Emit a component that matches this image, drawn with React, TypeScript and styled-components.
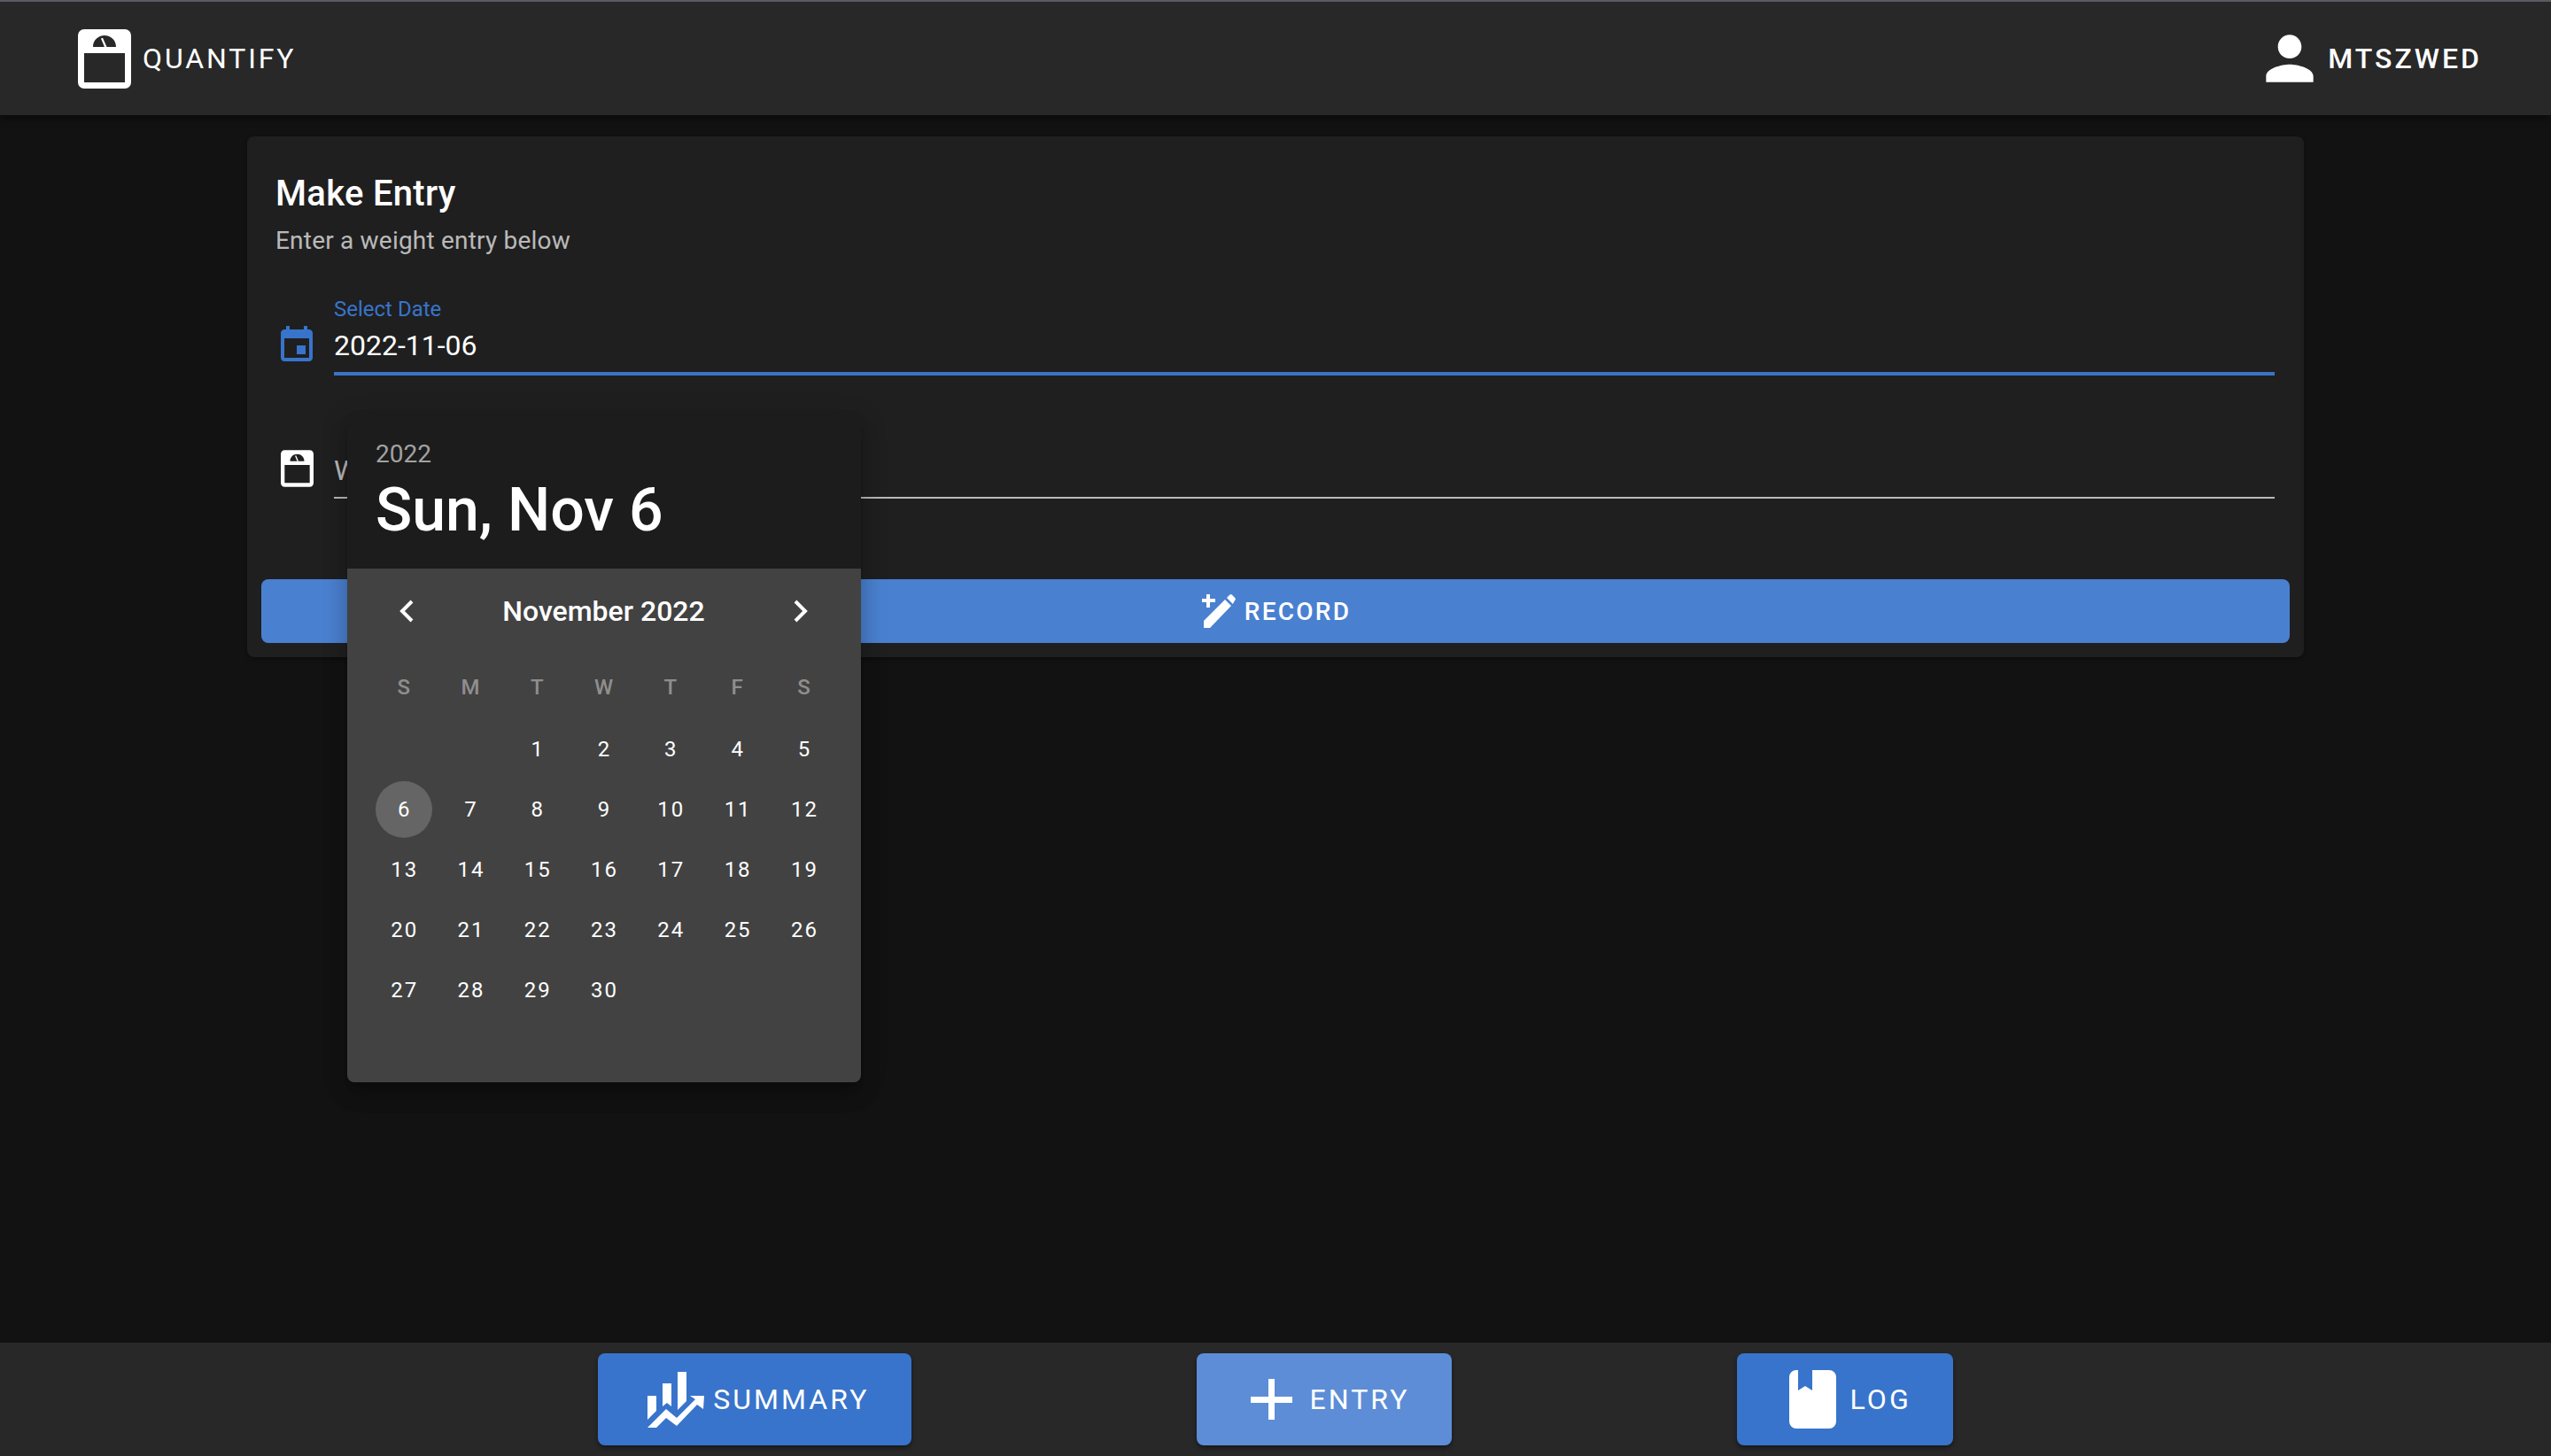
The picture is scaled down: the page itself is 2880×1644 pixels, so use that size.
import React from 'react';
import styled, { createGlobalStyle } from 'styled-components';

const BLUE = '#3874cb';

const GlobalStyle = createGlobalStyle`
  html, body {
    margin: 0;
    padding: 0;
    background: #121212;
    font-family: Roboto, "Liberation Sans", sans-serif;
    color: #fff;
  }
  * {
    box-sizing: border-box;
  }
`;

const Page = styled.div`
  height: 1644px;
  display: flex;
  flex-direction: column;
  background: #121212;
  overflow: hidden;
`;

const TopBar = styled.header`
  height: 130px;
  flex-shrink: 0;
  border-top: 2px solid #5b5b63;
  background: #282828;
  box-shadow: 0 4px 8px rgba(0, 0, 0, 0.45);
  display: flex;
  align-items: center;
  justify-content: space-between;
  padding: 0 78px 0 88px;
  position: relative;
  z-index: 2;
`;

const Brand = styled.div`
  display: flex;
  align-items: center;
  gap: 13px;
`;

const BrandName = styled.span`
  font-size: 32px;
  font-weight: 400;
  letter-spacing: 0.09em;
`;

const UserBox = styled.div`
  display: flex;
  align-items: center;
  gap: 3px;
`;

const UserName = styled.span`
  font-size: 32px;
  font-weight: 500;
  letter-spacing: 0.095em;
`;

const Main = styled.main`
  flex: 1;
  padding-top: 24px;
`;

const Card = styled.section`
  position: relative;
  width: 2322px;
  height: 588px;
  margin: 0 auto;
  padding: 33px 16px 16px;
  border-radius: 8px;
  background: #1f1f1f;
  box-shadow: 0 2px 4px rgba(0, 0, 0, 0.3);
`;

const CardBody = styled.div`
  padding: 0 17px;
`;

const Title = styled.h1`
  margin: 0 0 0 -1px;
  font-size: 40px;
  line-height: 64px;
  font-weight: 500;
  letter-spacing: 0.0075em;
`;

const Subtitle = styled.p`
  margin: 1px 0 41px -1px;
  font-size: 28px;
  line-height: 40px;
  color: rgba(255, 255, 255, 0.7);
  letter-spacing: 0.00714em;
`;

const FieldRow = styled.div`
  display: flex;
  align-items: flex-end;
  gap: 18px;
  margin-bottom: ${p => p.$after}px;
`;

const FieldIcon = styled.div`
  width: 48px;
  height: 48px;
  margin-left: -1px;
  margin-bottom: ${p => p.$lift}px;
  display: flex;
  align-items: center;
  justify-content: center;
  color: ${p => p.$color};
`;

const Field = styled.div`
  flex: 1;
  border-bottom: ${p => (p.$focused ? `4px solid ${BLUE}` : '2px solid #b9b9b9')};
`;

const FieldLabel = styled.div`
  height: 32px;
  font-size: 24px;
  line-height: 32px;
  color: ${BLUE};
`;

const FieldValue = styled.div`
  height: 55px;
  font-size: 32px;
  line-height: 50px;
  color: ${p => (p.$muted ? 'rgba(255, 255, 255, 0.7)' : '#fff')};
`;

const RecordButton = styled.button`
  width: 100%;
  height: 72px;
  border: 0;
  border-radius: 8px;
  padding: 0 0 0 2px;
  background: #4a80d0;
  color: #fff;
  font: 500 28px Roboto, sans-serif;
  letter-spacing: 0.08em;
  display: flex;
  align-items: center;
  justify-content: center;
  gap: 10px;
  margin-top: 91px;
`;

const Picker = styled.div`
  position: absolute;
  left: 113px;
  top: 313px;
  width: 580px;
  border-radius: 8px;
  overflow: hidden;
  box-shadow: 0 10px 10px -6px rgba(0, 0, 0, 0.2), 0 16px 20px 2px rgba(0, 0, 0, 0.14),
    0 6px 28px 4px rgba(0, 0, 0, 0.12);
  z-index: 3;
`;

const PickerHead = styled.div`
  height: 175px;
  padding: 26px 32px 0;
  background: #1c1c1c;
`;

const PickerYear = styled.div`
  font-size: 28px;
  line-height: 40px;
  color: rgba(255, 255, 255, 0.6);
`;

const PickerDate = styled.div`
  margin-top: 3px;
  font-size: 68px;
  line-height: 80px;
  font-weight: 500;
`;

const PickerBody = styled.div`
  height: 580px;
  padding: 20px 26px 0;
  background: #424242;
`;

const MonthNav = styled.div`
  height: 56px;
  display: flex;
  align-items: center;
  justify-content: space-between;
  padding: 0 33px 0 32px;
`;

const MonthName = styled.div`
  font-size: 32px;
  font-weight: 500;
`;

const WeekGrid = styled.div`
  display: grid;
  grid-template-columns: repeat(7, 75.3px);
  height: 40px;
  margin-top: 38px;
  margin-bottom: 16px;
`;

const WeekDay = styled.div`
  display: flex;
  align-items: center;
  justify-content: center;
  font-size: 24px;
  font-weight: 500;
  color: rgba(255, 255, 255, 0.42);
`;

const DayGrid = styled.div`
  display: grid;
  grid-template-columns: repeat(7, 75.3px);
  grid-auto-rows: 68px;
`;

const Day = styled.div`
  display: flex;
  align-items: center;
  justify-content: center;
`;

const DayNum = styled.span`
  width: 64px;
  height: 64px;
  padding-left: 2px;
  border-radius: 50%;
  display: flex;
  align-items: center;
  justify-content: center;
  font-size: 24px;
  letter-spacing: 0.0833em;
  background: ${p => (p.$selected ? '#656565' : 'transparent')};
`;

const BottomBar = styled.nav`
  height: 128px;
  flex-shrink: 0;
  background: #282828;
  display: flex;
  align-items: center;
  justify-content: center;
  gap: 322px;
`;

const NavButton = styled.button`
  height: 104px;
  border: 0;
  border-radius: 8px;
  padding: 0 47px 0 ${p => p.$left}px;
  display: flex;
  align-items: center;
  gap: ${p => p.$gap}px;
  color: #fff;
  background: ${p => (p.$active ? '#5d8dd6' : BLUE)};
  font: 400 32px Roboto, sans-serif;
  letter-spacing: 0.095em;
  box-shadow: 0 3px 5px rgba(0, 0, 0, 0.4);
`;

const ScaleIcon = ({ w, h }: { w: number; h: number }) => (
  <svg width={w} height={h} viewBox="0 0 60 67" fill="currentColor">
    <path
      fillRule="evenodd"
      d="M7 0h46a7 7 0 0 1 7 7v53a7 7 0 0 1-7 7H7a7 7 0 0 1-7-7V7a7 7 0 0 1 7-7zM7 27v33h46V27zM17 20h26c0-7.5-5.800-13-13-13s-13 5.500-13 13z"
    />
    <path d="M26 10.500l2-.800 4.500 10.300h-2.500z" />
  </svg>
);

const PersonIcon = () => (
  <svg width="80" height="80" viewBox="0 0 24 24" fill="#fff">
    <path d="M12 12c2.210 0 4-1.790 4-4s-1.790-4-4-4-4 1.790-4 4 1.790 4 4 4zm0 2c-2.670 0-8 1.340-8 4v2h16v-2c0-2.660-5.330-4-8-4z" />
  </svg>
);

const EventIcon = () => (
  <svg width="48" height="48" viewBox="0 0 24 24" fill={BLUE}>
    <path d="M17 12h-5v5h5v-5zM16 1v2H8V1H6v2H5c-1.110 0-1.990.9-1.990 2L3 19c0 1.100.89 2 2 2h14c1.100 0 2-.9 2-2V5c0-1.100-.9-2-2-2h-1V1h-2zm3 18H5V8h14v11z" />
  </svg>
);

const PencilPlusIcon = () => (
  <svg width="38" height="38" viewBox="0 0 38 38" fill="#fff">
    <path d="M5 0h4v5h6v4H9v6H5V9H0V5h5z" />
    <path d="M2 30L26 6l7 7L9 38H2z" />
    <path d="M28 4l3.200-3.200a2 2 0 0 1 2.800 0l3.200 3.200a2 2 0 0 1 0 2.800L34.800 11z" />
  </svg>
);

const ChevronIcon = ({ flip }: { flip?: boolean }) => (
  <svg width="18" height="26" viewBox="0 0 18 26" fill="none" stroke="#fff" strokeWidth="4">
    <path d={flip ? 'M3 2l11 11L3 24' : 'M15 2L4 13l11 11'} />
  </svg>
);

const SummaryIcon = () => (
  <svg width="64" height="63" viewBox="0 0 64 63" fill="#fff">
    <path d="M0 27h10v17L0 54z" />
    <path d="M17 13h10v26l-5-4-5 4z" />
    <path d="M34 0h10v33l-10 10z" />
    <path d="M0 63h10l11-11 12 9 23-24 7 5 1-15H48l6 4-21 21-12-10z" />
  </svg>
);

const PlusIcon = () => (
  <svg width="47" height="46" viewBox="0 0 47 46" fill="#fff">
    <path d="M20 0h7v20h20v7H27v19h-7V27H0v-7h20z" />
  </svg>
);

const BookIcon = () => (
  <svg width="53" height="66" viewBox="0 0 53 66" fill="#fff">
    <path d="M8 0h2v23l8-5 8 5V0h19a8 8 0 0 1 8 8v50a8 8 0 0 1-8 8H8a8 8 0 0 1-8-8V8a8 8 0 0 1 8-8z" />
  </svg>
);

const WEEK_DAYS = ['S', 'M', 'T', 'W', 'T', 'F', 'S'];
const DAYS = [0, 0, ...Array.from({ length: 30 }, (_, i) => i + 1)];

const App: React.FC = () => {
  return (
    <Page>
      <GlobalStyle />
      <TopBar>
        <Brand>
          <ScaleIcon w={60} h={67} />
          <BrandName>QUANTIFY</BrandName>
        </Brand>
        <UserBox>
          <PersonIcon />
          <UserName>MTSZWED</UserName>
        </UserBox>
      </TopBar>

      <Main>
        <Card>
          <CardBody>
            <Title>Make Entry</Title>
            <Subtitle>Enter a weight entry below</Subtitle>

            <FieldRow $after={50}>
              <FieldIcon $color={BLUE} $lift={10}>
                <EventIcon />
              </FieldIcon>
              <Field $focused>
                <FieldLabel>Select Date</FieldLabel>
                <FieldValue>2022-11-06</FieldValue>
              </Field>
            </FieldRow>

            <FieldRow $after={0}>
              <FieldIcon $color="#fff" $lift={10}>
                <ScaleIcon w={37} h={42} />
              </FieldIcon>
              <Field>
                <FieldLabel />
                <FieldValue $muted>W</FieldValue>
              </Field>
            </FieldRow>
          </CardBody>

          <RecordButton>
            <PencilPlusIcon />
            RECORD
          </RecordButton>

          <Picker>
            <PickerHead>
              <PickerYear>2022</PickerYear>
              <PickerDate>Sun, Nov 6</PickerDate>
            </PickerHead>
            <PickerBody>
              <MonthNav>
                <ChevronIcon />
                <MonthName>November 2022</MonthName>
                <ChevronIcon flip />
              </MonthNav>
              <WeekGrid>
                {WEEK_DAYS.map((d, i) => (
                  <WeekDay key={i}>{d}</WeekDay>
                ))}
              </WeekGrid>
              <DayGrid>
                {DAYS.map((d, i) => (
                  <Day key={i}>
                    {d > 0 && <DayNum $selected={d === 6}>{d}</DayNum>}
                  </Day>
                ))}
              </DayGrid>
            </PickerBody>
          </Picker>
        </Card>
      </Main>

      <BottomBar>
        <NavButton $left={56} $gap={10}>
          <SummaryIcon />
          SUMMARY
        </NavButton>
        <NavButton $left={61} $gap={20} $active>
          <PlusIcon />
          ENTRY
        </NavButton>
        <NavButton $left={59} $gap={16}>
          <BookIcon />
          LOG
        </NavButton>
      </BottomBar>
    </Page>
  );
};

export default App;
